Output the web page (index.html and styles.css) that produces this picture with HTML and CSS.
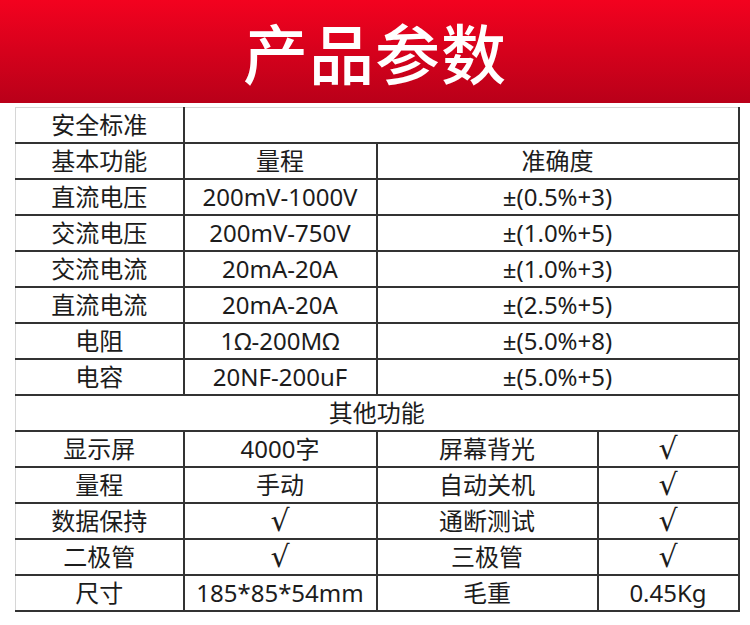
FILE: index.html
```html
<!DOCTYPE html>
<html lang="zh">
<head>
    <meta charset="UTF-8">
    <meta name="viewport" content="width=device-width, initial-scale=1.0">
    <title>产品参数</title>
    <link rel="stylesheet" href="styles.css">
</head>
<body>
    <div class="banner">
        <h1>产品参数</h1>
    </div>

    <table class="spec-table">
        <colgroup>
            <col class="c1">
            <col class="c2">
            <col class="c3">
            <col class="c4">
        </colgroup>
        <tr><td>安全标准</td><td colspan="3"></td></tr>
        <tr><td>基本功能</td><td>量程</td><td colspan="2">准确度</td></tr>
        <tr><td>直流电压</td><td>200mV-1000V</td><td colspan="2">±(0.5%+3)</td></tr>
        <tr><td>交流电压</td><td>200mV-750V</td><td colspan="2">±(1.0%+5)</td></tr>
        <tr><td>交流电流</td><td>20mA-20A</td><td colspan="2">±(1.0%+3)</td></tr>
        <tr><td>直流电流</td><td>20mA-20A</td><td colspan="2">±(2.5%+5)</td></tr>
        <tr><td>电阻</td><td>1Ω-200MΩ</td><td colspan="2">±(5.0%+8)</td></tr>
        <tr><td>电容</td><td>20NF-200uF</td><td colspan="2">±(5.0%+5)</td></tr>
        <tr><td colspan="4">其他功能</td></tr>
        <tr><td>显示屏</td><td>4000字</td><td>屏幕背光</td><td class="tick">√</td></tr>
        <tr><td>量程</td><td>手动</td><td>自动关机</td><td class="tick">√</td></tr>
        <tr><td>数据保持</td><td class="tick">√</td><td>通断测试</td><td class="tick">√</td></tr>
        <tr><td>二极管</td><td class="tick">√</td><td>三极管</td><td class="tick">√</td></tr>
        <tr><td>尺寸</td><td>185*85*54mm</td><td>毛重</td><td>0.45Kg</td></tr>
    </table>
</body>
</html>
```

FILE: styles.css
```css
body {
    margin: 0;
    padding: 0;
    background-color: #fff;
    font-family: "Noto Sans", "Noto Sans CJK SC", sans-serif;
}

.banner {
    height: 103px;
    background: linear-gradient(to bottom, #f3021f, #b90019);
    display: flex;
    align-items: center;
    justify-content: center;
}

.banner h1 {
    margin: 0;
    color: #fff;
    font-family: "Noto Sans CJK SC", sans-serif;
    font-size: 65px;
    font-weight: 500;
    letter-spacing: 1px;
    line-height: 1;
}

.spec-table {
    margin: 4px 0 0 15px;
    width: 723px;
    border-collapse: collapse;
    table-layout: fixed;
    border-top: 1px solid #d6d6d6;
    border-left: 1px solid #d6d6d6;
}

.spec-table .c1 { width: 168px; }
.spec-table .c2 { width: 193px; }
.spec-table .c3 { width: 221px; }
.spec-table .c4 { width: 141px; }

.spec-table td {
    height: 34px;
    padding: 0;
    border: 2px solid #333;
    text-align: center;
    font-size: 24px;
    line-height: 34px;
    color: #1c1c1c;
    white-space: nowrap;
}

.spec-table tr:first-child td {
    border-top: 1px solid #d6d6d6;
}

.spec-table td:first-child {
    border-left: 1px solid #d6d6d6;
}

.spec-table .tick {
    font-family: "DejaVu Sans", sans-serif;
    font-size: 30px;
    line-height: 34px;
}
```
